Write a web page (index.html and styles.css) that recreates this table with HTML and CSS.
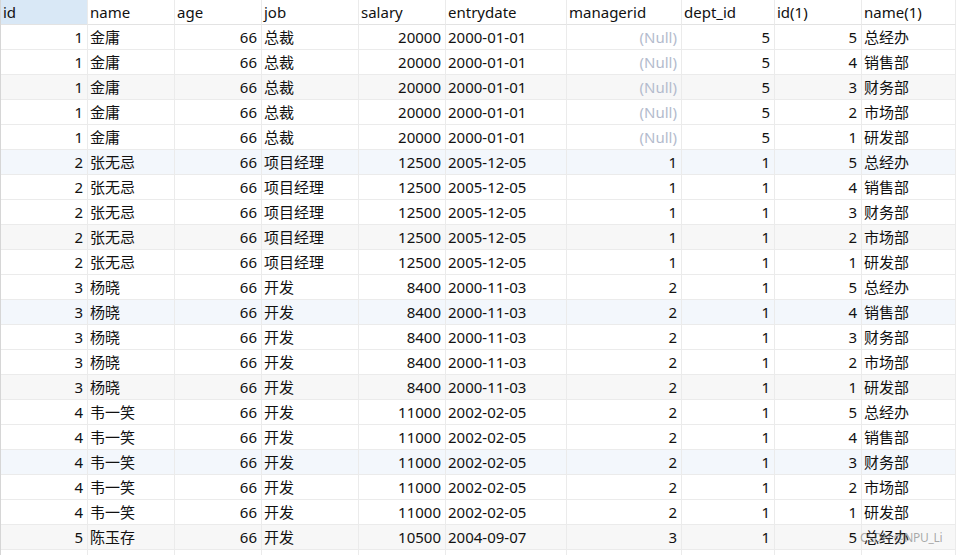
FILE: index.html
```html
<!DOCTYPE html>
<html lang="zh">
<head>
<meta charset="utf-8">
<title>Result</title>
<link rel="stylesheet" href="styles.css">
</head>
<body>
<div class="grid">
  <div class="row head">
    <div class="c sel">id</div><div class="c">name</div><div class="c">age</div><div class="c">job</div><div class="c">salary</div><div class="c">entrydate</div><div class="c">managerid</div><div class="c">dept_id</div><div class="c">id(1)</div><div class="c">name(1)</div>
  </div>
  <div class="row"><div class="c n">1</div><div class="c">金庸</div><div class="c n">66</div><div class="c">总裁</div><div class="c n">20000</div><div class="c">2000-01-01</div><div class="c n null">(Null)</div><div class="c n">5</div><div class="c n">5</div><div class="c">总经办</div></div>
  <div class="row"><div class="c n">1</div><div class="c">金庸</div><div class="c n">66</div><div class="c">总裁</div><div class="c n">20000</div><div class="c">2000-01-01</div><div class="c n null">(Null)</div><div class="c n">5</div><div class="c n">4</div><div class="c">销售部</div></div>
  <div class="row gray"><div class="c n">1</div><div class="c">金庸</div><div class="c n">66</div><div class="c">总裁</div><div class="c n">20000</div><div class="c">2000-01-01</div><div class="c n null">(Null)</div><div class="c n">5</div><div class="c n">3</div><div class="c">财务部</div></div>
  <div class="row"><div class="c n">1</div><div class="c">金庸</div><div class="c n">66</div><div class="c">总裁</div><div class="c n">20000</div><div class="c">2000-01-01</div><div class="c n null">(Null)</div><div class="c n">5</div><div class="c n">2</div><div class="c">市场部</div></div>
  <div class="row"><div class="c n">1</div><div class="c">金庸</div><div class="c n">66</div><div class="c">总裁</div><div class="c n">20000</div><div class="c">2000-01-01</div><div class="c n null">(Null)</div><div class="c n">5</div><div class="c n">1</div><div class="c">研发部</div></div>
  <div class="row blue"><div class="c n">2</div><div class="c">张无忌</div><div class="c n">66</div><div class="c">项目经理</div><div class="c n">12500</div><div class="c">2005-12-05</div><div class="c n">1</div><div class="c n">1</div><div class="c n">5</div><div class="c">总经办</div></div>
  <div class="row"><div class="c n">2</div><div class="c">张无忌</div><div class="c n">66</div><div class="c">项目经理</div><div class="c n">12500</div><div class="c">2005-12-05</div><div class="c n">1</div><div class="c n">1</div><div class="c n">4</div><div class="c">销售部</div></div>
  <div class="row"><div class="c n">2</div><div class="c">张无忌</div><div class="c n">66</div><div class="c">项目经理</div><div class="c n">12500</div><div class="c">2005-12-05</div><div class="c n">1</div><div class="c n">1</div><div class="c n">3</div><div class="c">财务部</div></div>
  <div class="row gray"><div class="c n">2</div><div class="c">张无忌</div><div class="c n">66</div><div class="c">项目经理</div><div class="c n">12500</div><div class="c">2005-12-05</div><div class="c n">1</div><div class="c n">1</div><div class="c n">2</div><div class="c">市场部</div></div>
  <div class="row"><div class="c n">2</div><div class="c">张无忌</div><div class="c n">66</div><div class="c">项目经理</div><div class="c n">12500</div><div class="c">2005-12-05</div><div class="c n">1</div><div class="c n">1</div><div class="c n">1</div><div class="c">研发部</div></div>
  <div class="row"><div class="c n">3</div><div class="c">杨晓</div><div class="c n">66</div><div class="c">开发</div><div class="c n">8400</div><div class="c">2000-11-03</div><div class="c n">2</div><div class="c n">1</div><div class="c n">5</div><div class="c">总经办</div></div>
  <div class="row blue"><div class="c n">3</div><div class="c">杨晓</div><div class="c n">66</div><div class="c">开发</div><div class="c n">8400</div><div class="c">2000-11-03</div><div class="c n">2</div><div class="c n">1</div><div class="c n">4</div><div class="c">销售部</div></div>
  <div class="row"><div class="c n">3</div><div class="c">杨晓</div><div class="c n">66</div><div class="c">开发</div><div class="c n">8400</div><div class="c">2000-11-03</div><div class="c n">2</div><div class="c n">1</div><div class="c n">3</div><div class="c">财务部</div></div>
  <div class="row"><div class="c n">3</div><div class="c">杨晓</div><div class="c n">66</div><div class="c">开发</div><div class="c n">8400</div><div class="c">2000-11-03</div><div class="c n">2</div><div class="c n">1</div><div class="c n">2</div><div class="c">市场部</div></div>
  <div class="row gray"><div class="c n">3</div><div class="c">杨晓</div><div class="c n">66</div><div class="c">开发</div><div class="c n">8400</div><div class="c">2000-11-03</div><div class="c n">2</div><div class="c n">1</div><div class="c n">1</div><div class="c">研发部</div></div>
  <div class="row"><div class="c n">4</div><div class="c">韦一笑</div><div class="c n">66</div><div class="c">开发</div><div class="c n">11000</div><div class="c">2002-02-05</div><div class="c n">2</div><div class="c n">1</div><div class="c n">5</div><div class="c">总经办</div></div>
  <div class="row"><div class="c n">4</div><div class="c">韦一笑</div><div class="c n">66</div><div class="c">开发</div><div class="c n">11000</div><div class="c">2002-02-05</div><div class="c n">2</div><div class="c n">1</div><div class="c n">4</div><div class="c">销售部</div></div>
  <div class="row blue"><div class="c n">4</div><div class="c">韦一笑</div><div class="c n">66</div><div class="c">开发</div><div class="c n">11000</div><div class="c">2002-02-05</div><div class="c n">2</div><div class="c n">1</div><div class="c n">3</div><div class="c">财务部</div></div>
  <div class="row"><div class="c n">4</div><div class="c">韦一笑</div><div class="c n">66</div><div class="c">开发</div><div class="c n">11000</div><div class="c">2002-02-05</div><div class="c n">2</div><div class="c n">1</div><div class="c n">2</div><div class="c">市场部</div></div>
  <div class="row"><div class="c n">4</div><div class="c">韦一笑</div><div class="c n">66</div><div class="c">开发</div><div class="c n">11000</div><div class="c">2002-02-05</div><div class="c n">2</div><div class="c n">1</div><div class="c n">1</div><div class="c">研发部</div></div>
  <div class="row gray"><div class="c n">5</div><div class="c">陈玉存</div><div class="c n">66</div><div class="c">开发</div><div class="c n">10500</div><div class="c">2004-09-07</div><div class="c n">3</div><div class="c n">1</div><div class="c n">5</div><div class="c">总经办</div></div>
  <div class="row"><div class="c"></div><div class="c"></div><div class="c"></div><div class="c"></div><div class="c"></div><div class="c"></div><div class="c"></div><div class="c"></div><div class="c"></div><div class="c"></div></div>
</div>
<div class="watermark">CSDN @NPU_Li</div>
</body>
</html>
```

FILE: styles.css
```css
html, body {
  margin: 0;
  padding: 0;
  background: #ffffff;
  overflow: hidden;
  height: 555px;
}

body {
  font-family: "Noto Sans", "Noto Sans CJK SC", sans-serif;
  font-size: 15px;
  color: #111111;
}

.grid {
  border-left: 1px solid #d6d6d6;
  width: 955px;
}

.row {
  display: grid;
  grid-template-columns: 87px 87px 87px 97px 87px 121px 115px 93px 87px 1fr;
  height: 25px;
}

.row.gray { background: #f7f7f7; }
.row.blue { background: #f3f7fc; }

.c {
  box-sizing: border-box;
  height: 25px;
  line-height: 24px;
  padding: 0 4px 0 2px;
  border-right: 1px solid #ebebeb;
  border-bottom: 1px solid #ebebeb;
  white-space: nowrap;
  overflow: hidden;
}

.head .c {
  border-bottom-color: #e3e3e3;
}

.c.sel { background: #d9e8f6; }

.c.n { text-align: right; }

.c.null { color: #b3bbcd; }

.watermark {
  position: absolute;
  left: 860px;
  top: 530px;
  font-family: "Noto Sans", sans-serif;
  font-size: 12px;
  letter-spacing: -0.3px;
  line-height: 16px;
  color: rgba(90, 90, 90, 0.5);
  white-space: nowrap;
}
```
